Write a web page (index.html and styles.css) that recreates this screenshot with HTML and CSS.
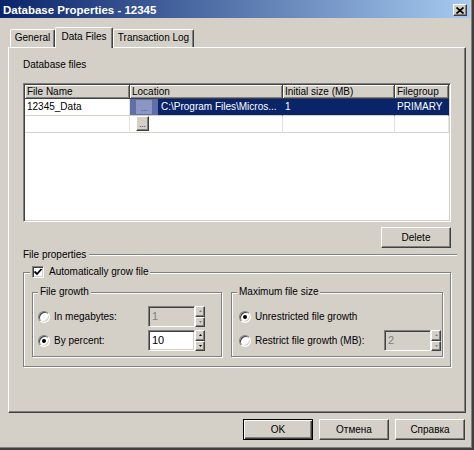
FILE: index.html
```html
<!DOCTYPE html>
<html>
<head>
<meta charset="utf-8">
<title>Database Properties - 12345</title>
<link rel="stylesheet" href="styles.css">
</head>
<body>
<div class="window">
  <div class="titlebar">
    <span class="title">Database Properties - 12345</span>
    <span class="close"><svg width="8" height="7" viewBox="0 0 8 7"><path d="M0.5 0.5 L7.5 6.5 M7.5 0.5 L0.5 6.5" stroke="#000" stroke-width="1.7" fill="none"/></svg></span>
  </div>

  <div class="tabs">
    <div class="tab t-general">General</div>
    <div class="tab t-data active">Data Files</div>
    <div class="tab t-log">Transaction Log</div>
  </div>

  <div class="panel">
    <div class="label">Database files</div>

    <div class="grid">
      <div class="grid-inner">
        <div class="hd">File Name</div>
        <div class="hd">Location</div>
        <div class="hd">Initial size (MB)</div>
        <div class="hd">Filegroup</div>

        <div class="cell">12345_Data</div>
        <div class="cell sel loc"><span class="ell-sel"><span class="ell-in">...</span></span><span class="loc-text">C:\Program Files\Micros...</span></div>
        <div class="cell sel">1</div>
        <div class="cell sel">PRIMARY</div>

        <div class="cell"></div>
        <div class="cell loc"><span class="ell-btn">...</span></div>
        <div class="cell"></div>
        <div class="cell"></div>
      </div>
    </div>

    <div class="actions">
      <button class="btn">Delete</button>
    </div>

    <div class="section"><span>File properties</span><span class="line"></span></div>

    <div class="group auto">
      <div class="gtitle gt-auto">
        <span class="check"><svg width="10" height="10" viewBox="0 0 10 10"><path d="M1.5 4.5 L4 7 L8.5 2" stroke="#000" stroke-width="1.8" fill="none"/></svg></span>
        <span>Automatically grow file</span>
      </div>
      <div class="cols">
        <div class="group growth">
          <div class="gtitle gt-growth">File growth</div>
          <div class="rows">
            <div class="row">
              <span class="radio"></span>
              <span class="lbl">In megabytes:</span>
              <div class="spin disabled">
                <span class="field">1</span>
                <span class="arrows">
                  <span class="arr"><svg width="3" height="2" viewBox="0 0 3 2"><polygon points="0,2 3,2 1.5,0" fill="#808080"/></svg></span>
                  <span class="arr"><svg width="3" height="2" viewBox="0 0 3 2"><polygon points="0,0 3,0 1.5,2" fill="#808080"/></svg></span>
                </span>
              </div>
            </div>
            <div class="row">
              <span class="radio on"></span>
              <span class="lbl">By percent:</span>
              <div class="spin">
                <span class="field">10</span>
                <span class="arrows">
                  <span class="arr"><svg width="3" height="2" viewBox="0 0 3 2"><polygon points="0,2 3,2 1.5,0" fill="#000"/></svg></span>
                  <span class="arr"><svg width="3" height="2" viewBox="0 0 3 2"><polygon points="0,0 3,0 1.5,2" fill="#000"/></svg></span>
                </span>
              </div>
            </div>
          </div>
        </div>

        <div class="group maxsize">
          <div class="gtitle gt-max">Maximum file size</div>
          <div class="rows">
            <div class="row">
              <span class="radio on"></span>
              <span class="lbl">Unrestricted file growth</span>
            </div>
            <div class="row">
              <span class="radio"></span>
              <span class="lbl">Restrict file growth (MB):</span>
              <div class="spin disabled">
                <span class="field">2</span>
                <span class="arrows">
                  <span class="arr"><svg width="3" height="2" viewBox="0 0 3 2"><polygon points="0,2 3,2 1.5,0" fill="#808080"/></svg></span>
                  <span class="arr"><svg width="3" height="2" viewBox="0 0 3 2"><polygon points="0,0 3,0 1.5,2" fill="#808080"/></svg></span>
                </span>
              </div>
            </div>
          </div>
        </div>
      </div>
    </div>
  </div>

  <div class="btnrow">
    <button class="btn default">OK</button>
    <button class="btn">Отмена</button>
    <button class="btn">Справка</button>
  </div>
</div>
</body>
</html>
```

FILE: styles.css
```css
* { box-sizing: border-box; }
html, body { margin: 0; padding: 0; }
body {
  background: #d4d0c8;
  font-family: "Liberation Sans", Arial, sans-serif;
  font-size: 10px;
  color: #000;
}

.window {
  width: 474px;
  height: 450px;
  background: #d4d0c8;
  border-right: 2px solid #404040;
  border-bottom: 2px solid #404040;
  box-shadow: inset -1px -1px 0 #808080;
  padding: 0 2px 0 0;
  display: flex;
  flex-direction: column;
}

/* title bar */
.titlebar {
  height: 18px;
  flex: none;
  background: linear-gradient(to right, #0a246a, #a6caf0);
  display: flex;
  align-items: center;
  padding-left: 3px;
}
.title {
  color: #fff;
  font-weight: bold;
  font-size: 11.5px;
  line-height: 14px;
  margin-top: 2px;
  white-space: nowrap;
}
.close {
  margin-left: auto;
  margin-right: 3px;
  margin-top: 2px;
  width: 14px;
  height: 12px;
  background: #d4d0c8;
  border: 1px solid;
  border-color: #fff #404040 #404040 #fff;
  box-shadow: inset -1px -1px 0 #808080;
  display: flex;
  align-items: center;
  justify-content: center;
}
.close svg { display: block; }

/* tabs */
.tabs {
  display: flex;
  align-items: flex-end;
  height: 20px;
  margin-top: 9px;
  padding-left: 10px;
  flex: none;
}
.tab {
  height: 18px;
  line-height: 16px;
  text-align: center;
  white-space: nowrap;
  background: #d4d0c8;
  border-top: 1px solid #fff;
  border-left: 1px solid #fff;
  border-right: 1px solid #404040;
  box-shadow: inset -1px 0 0 #808080;
  border-radius: 2px 2px 0 0;
}
.t-general { width: 45px; }
.t-data { width: 58px; }
.t-log { width: 81px; }
.tab.active {
  height: 21px;
  line-height: 17px;
  margin-bottom: -1px;
  position: relative;
  z-index: 1;
}

/* panel */
.panel {
  margin-left: 8px;
  width: 458px;
  height: 366px;
  flex: none;
  border: 1px solid;
  border-color: #fff #404040 #404040 #fff;
  box-shadow: inset -1px -1px 0 #808080;
  padding: 11px 14px 0 14px;
}
.label {
  line-height: 12px;
  height: 12px;
}

/* data grid */
.grid {
  margin-top: 12px;
  height: 139px;
  border: 1px solid;
  border-color: #808080 #fff #fff #808080;
  padding: 1px;
  box-shadow: inset 1px 1px 0 #404040, inset -1px -1px 0 #d4d0c8;
  background: #fff;
}
.grid-inner {
  display: grid;
  grid-template-columns: 105px 153px 112px 54px;
  grid-template-rows: 14px 17px 17px;
  background: #fff;
}
.hd {
  background: #d4d0c8;
  border-right: 1px solid #404040;
  border-bottom: 1px solid #404040;
  box-shadow: inset 1px 1px 0 #fff, inset -1px -1px 0 #808080;
  padding-left: 2px;
  line-height: 13px;
  white-space: nowrap;
  overflow: hidden;
}
.cell {
  border-right: 1px solid #e4e2dd;
  border-bottom: 1px solid #d4d0c8;
  padding-left: 2px;
  line-height: 16px;
  white-space: nowrap;
  overflow: hidden;
  background: #fff;
}
.cell.sel {
  background: #0a246a;
  color: #fff;
  border-right-color: #0a246a;
}
.cell.loc {
  display: flex;
  padding-left: 0;
}
.ell-sel {
  width: 28px;
  height: 16px;
  background: #5f6ea6;
  display: flex;
  justify-content: center;
  align-items: flex-end;
  flex: none;
}
.ell-in {
  width: 16px;
  height: 14px;
  margin-bottom: 1px;
  background: #8a97c4;
  color: #2a3a70;
  font-size: 8px;
  line-height: 8px;
  display: flex;
  justify-content: center;
  align-items: flex-end;
  padding-bottom: 1px;
}
.loc-text {
  padding-left: 3px;
  white-space: nowrap;
}
.ell-btn {
  width: 13px;
  height: 15px;
  margin: 0 0 0 6px;
  background: #d4d0c8;
  border: 1px solid;
  border-color: #fff #404040 #404040 #fff;
  box-shadow: inset -1px -1px 0 #808080;
  font-size: 8px;
  line-height: 8px;
  display: flex;
  justify-content: center;
  align-items: flex-end;
  padding-bottom: 1px;
  color: #000;
}

/* buttons */
.btn {
  width: 70px;
  height: 21px;
  padding: 0;
  margin: 0;
  background: #d4d0c8;
  border: 1px solid;
  border-color: #fff #404040 #404040 #fff;
  box-shadow: inset -1px -1px 0 #808080;
  font-family: "Liberation Sans", Arial, sans-serif;
  font-size: 10px;
  color: #000;
}
.btn.default {
  border-color: #000;
  box-shadow: inset 1px 1px 0 #fff, inset -1px -1px 0 #404040, inset -2px -2px 0 #808080;
}
.actions {
  display: flex;
  justify-content: flex-end;
  margin-top: 5px;
}
.btnrow {
  display: flex;
  justify-content: flex-end;
  gap: 6px;
  margin-top: 6px;
  padding-right: 5px;
}

/* file properties header */
.section {
  display: flex;
  align-items: center;
  margin-top: 1px;
  height: 12px;
  line-height: 12px;
  margin-right: -6px;
}
.section .line {
  flex: 1;
  height: 2px;
  border-top: 1px solid #808080;
  border-bottom: 1px solid #fff;
  margin-left: 3px;
}

/* group boxes */
.group {
  border: 1px solid #808080;
  box-shadow: inset 1px 1px 0 #fff, 1px 1px 0 #fff;
}
.gtitle {
  margin-top: -7px;
  height: 12px;
  line-height: 12px;
  background: #d4d0c8;
  width: fit-content;
  padding: 0 2px;
  display: flex;
  align-items: center;
  white-space: nowrap;
}
.auto {
  margin-top: 11px;
  padding: 0 7px 9px 8px;
}
.gt-auto { margin-left: -2px; gap: 5px; }
.gt-max { margin-left: -2px; }
.cols {
  display: flex;
  gap: 9px;
  margin-top: 14px;
}
.growth {
  width: 190px;
  flex: none;
  padding: 0 16px 5px 5px;
}
.maxsize {
  flex: 1;
  padding: 0 1px 5px 7px;
}
.rows {
  margin-top: 8px;
  display: flex;
  flex-direction: column;
  gap: 3px;
}
.row {
  display: flex;
  align-items: center;
  height: 21px;
}
.lbl {
  flex: 1;
  margin-left: 4px;
  white-space: nowrap;
}

/* check & radio */
.check {
  width: 12px;
  height: 12px;
  background: #fff;
  border: 1px solid;
  border-color: #808080 #fff #fff #808080;
  box-shadow: inset 1px 1px 0 #404040, inset -1px -1px 0 #d4d0c8;
  display: flex;
  align-items: center;
  justify-content: center;
  flex: none;
}
.check svg { display: block; }
.radio {
  width: 12px;
  height: 12px;
  border-radius: 50%;
  background: #fff;
  border: 1px solid;
  border-color: #808080 #fff #fff #808080;
  box-shadow: inset 1px 1px 0 #404040, inset -1px -1px 0 #d4d0c8;
  display: flex;
  align-items: center;
  justify-content: center;
  flex: none;
}
.radio.on::after {
  content: "";
  width: 4px;
  height: 4px;
  border-radius: 50%;
  background: #000;
}

/* spin edits */
.spin {
  display: flex;
  height: 21px;
  flex: none;
}
.spin .field {
  width: 47px;
  height: 21px;
  background: #fff;
  border: 1px solid;
  border-color: #808080 #fff #fff #808080;
  box-shadow: inset 1px 1px 0 #404040, inset -1px -1px 0 #d4d0c8;
  padding-left: 3px;
  line-height: 19px;
  font-size: 11px;
}
.spin.disabled .field {
  background: #d4d0c8;
  color: #808080;
}
.arrows {
  width: 10px;
  display: flex;
  flex-direction: column;
}
.arr {
  flex: 1;
  background: #d4d0c8;
  border: 1px solid;
  border-color: #fff #404040 #404040 #fff;
  box-shadow: inset -1px -1px 0 #808080;
  display: flex;
  align-items: center;
  justify-content: center;
}
.arr svg { display: block; }
```
